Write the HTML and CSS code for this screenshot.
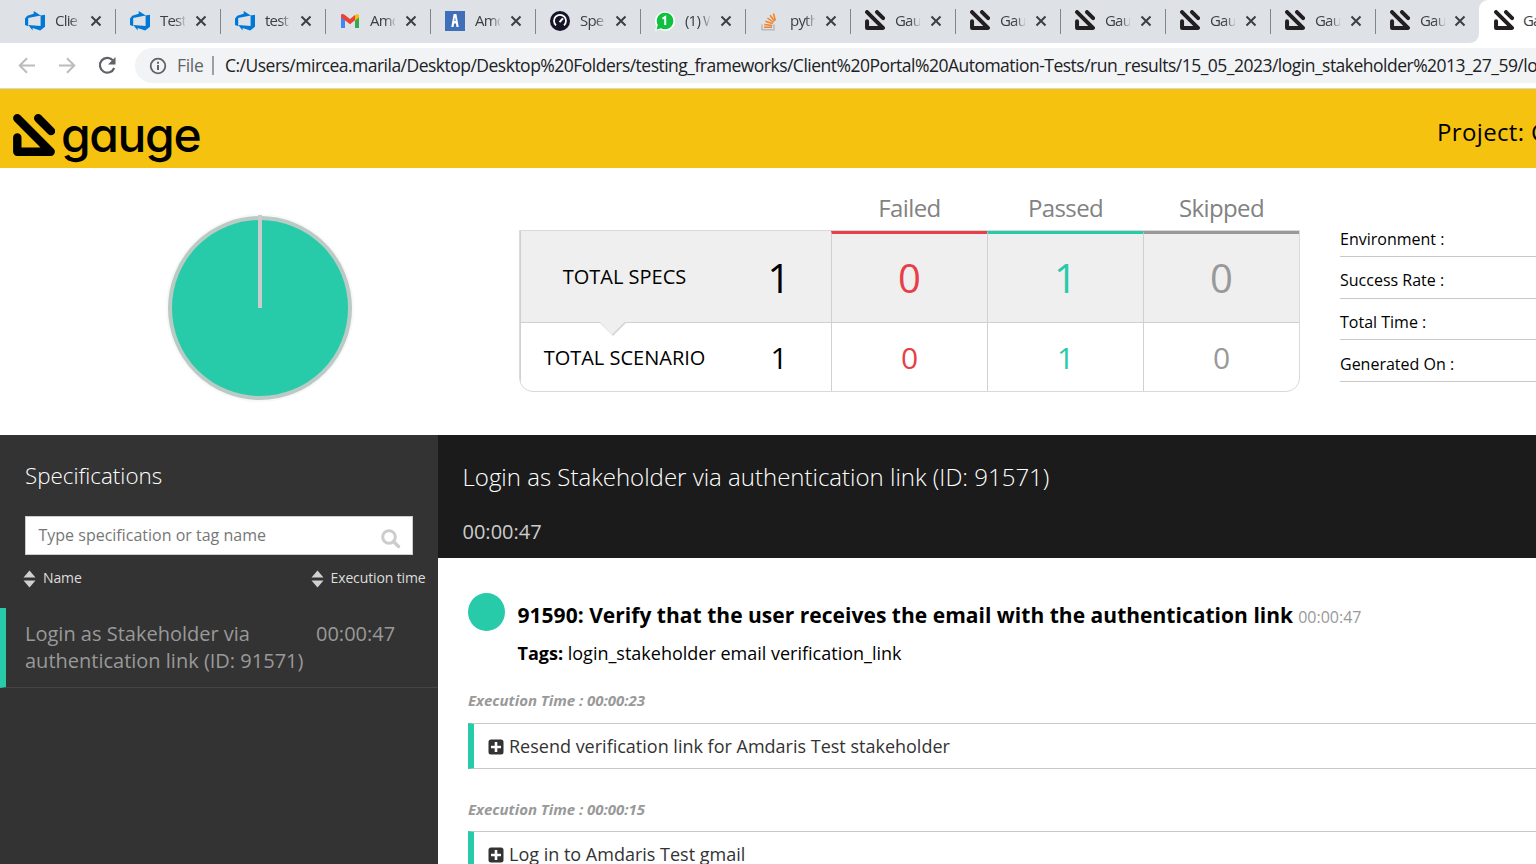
FILE: index.html
```html
<!DOCTYPE html>
<html lang="en">
<head>
<meta charset="utf-8">
<title>Gauge Test Results</title>
<link rel="stylesheet" href="styles.css">
</head>
<body>
<svg class="defs" width="0" height="0" aria-hidden="true">
  <symbol id="gauge" viewBox="0 0 42 42"><path d="M4.3 4.3 37.7 37.7H4.3V23.5M25.2 4.3 38 17.1" fill="none" stroke="currentColor" stroke-width="8.4" stroke-linecap="round" stroke-linejoin="round"/></symbol>
  <symbol id="devops" viewBox="0 0 20 20"><path d="M20 3.8v11.9L15.200 19.600 7.600 16.900v2.700L3.300 14l12.300 1V4.400zM15.700 4.500 8.700 0v2.800L2.200 4.700 0 7.500v6.400l3.200 1.300V6.900z" fill="#0078d7"/></symbol>
  <symbol id="x" viewBox="0 0 12 12"><path d="M1.500 1.500l9 9M10.500 1.500l-9 9" stroke="#3c4043" stroke-width="2" fill="none"/></symbol>
  <symbol id="plus" viewBox="0 0 16 16"><path fill-rule="evenodd" fill="#333" d="M3 0.500h10a2.500 2.500 0 0 1 2.500 2.500v10a2.500 2.500 0 0 1-2.500 2.500H3A2.500 2.500 0 0 1 .5 13V3A2.500 2.500 0 0 1 3 .5zM6.700 3v3.700H3v2.600h3.700V13h2.600V9.300H13V6.700H9.300V3z"/></symbol>
  <symbol id="sort" viewBox="0 0 12 18"><path fill="#d0d0d0" d="M6 .5 12 7.500H0zM6 17.500 12 10.500H0z"/></symbol>
</svg>

<header class="browser">
  <div class="tabs">
    <div class="tab"><svg class="fav"><use href="#devops"/></svg><span class="tab-title">Clie</span><svg class="close"><use href="#x"/></svg></div>
    <div class="tab"><svg class="fav"><use href="#devops"/></svg><span class="tab-title">Test</span><svg class="close"><use href="#x"/></svg></div>
    <div class="tab"><svg class="fav"><use href="#devops"/></svg><span class="tab-title">test</span><svg class="close"><use href="#x"/></svg></div>
    <div class="tab"><svg class="fav" viewBox="0 0 20 20"><path d="M1 5v12h4V8z" fill="#4285f4"/><path d="M19 5v12h-4V8z" fill="#34a853"/><path d="M1 4.500C1 2.500 3.200 2.700 4.500 3.700L10 8l5-4v5.300l-5 4-9-7z" fill="#ea4335"/><path d="M15 4.200c2-1.700 4-1.200 4 .8v1.500l-4 3z" fill="#fbbc04"/></svg><span class="tab-title">Amd</span><svg class="close"><use href="#x"/></svg></div>
    <div class="tab"><svg class="fav" viewBox="0 0 20 20"><path d="M0 0h20v20H0z" fill="#3f6fb9"/><path d="M8.600 3h2.800l2.300 13h-2.200l-.6-3.500h-1.800L8.500 16H6.300zM10 6l-.7 4h1.400z" fill="#fff" fill-rule="evenodd"/></svg><span class="tab-title">Amd</span><svg class="close"><use href="#x"/></svg></div>
    <div class="tab"><svg class="fav" viewBox="0 0 20 20"><circle cx="10" cy="10" r="10" fill="#141526"/><path d="M6 14.300a6 6 0 1 1 8 0" fill="none" stroke="#fff" stroke-width="1.800"/><path d="M9.500 11.200 13 7.300" stroke="#fff" stroke-width="2"/></svg><span class="tab-title">Spe</span><svg class="close"><use href="#x"/></svg></div>
    <div class="tab"><svg class="fav" viewBox="0 0 20 20"><path d="M0 20l1.400-5A10 9.700 0 1 1 5 18.500z" fill="#fff"/><path d="M1.500 18.400 2.800 14A8.300 8.300 0 1 1 6 17.200z" fill="#10c140"/><path d="M7.500 7.600 10.200 6v8" fill="none" stroke="#fff" stroke-width="2"/></svg><span class="tab-title">(1) W</span><svg class="close"><use href="#x"/></svg></div>
    <div class="tab"><svg class="fav" viewBox="0 0 20 20"><path d="M2 13.500v5.300h12v-5.300" fill="none" stroke="#b5b9bd" stroke-width="1.500"/><path d="M4 16.300h8M4.300 13.500l7.900.9M5.400 10.200l7.300 2.400M7.500 7l6 4.500M10.100 4.300l4.400 6M13.500 2.500l1.800 7" stroke="#f48024" stroke-width="1.500"/></svg><span class="tab-title">pyth</span><svg class="close"><use href="#x"/></svg></div>
    <div class="tab"><svg class="fav g"><use href="#gauge"/></svg><span class="tab-title">Gau</span><svg class="close"><use href="#x"/></svg></div>
    <div class="tab"><svg class="fav g"><use href="#gauge"/></svg><span class="tab-title">Gau</span><svg class="close"><use href="#x"/></svg></div>
    <div class="tab"><svg class="fav g"><use href="#gauge"/></svg><span class="tab-title">Gau</span><svg class="close"><use href="#x"/></svg></div>
    <div class="tab"><svg class="fav g"><use href="#gauge"/></svg><span class="tab-title">Gau</span><svg class="close"><use href="#x"/></svg></div>
    <div class="tab"><svg class="fav g"><use href="#gauge"/></svg><span class="tab-title">Gau</span><svg class="close"><use href="#x"/></svg></div>
    <div class="tab last"><svg class="fav g"><use href="#gauge"/></svg><span class="tab-title">Gau</span><svg class="close"><use href="#x"/></svg></div>
    <div class="tab active"><svg class="fav g"><use href="#gauge"/></svg><span class="tab-title full">Ga</span></div>
  </div>
  <div class="toolbar">
    <svg class="nav" viewBox="0 0 20 20"><path d="M18 9.500H3M10 2.200 2.700 9.500l7.300 7.300" fill="none" stroke="#babcbe" stroke-width="2"/></svg>
    <svg class="nav" viewBox="0 0 20 20"><path d="M2 9.500h15M10 2.200l7.300 7.300-7.300 7.300" fill="none" stroke="#babcbe" stroke-width="2"/></svg>
    <svg class="nav" viewBox="0 0 20 20"><path d="M15.800 4.200A7.400 7.400 0 1 0 17.200 12" fill="none" stroke="#5f6368" stroke-width="2.200"/><path d="M18.500 1V8.500H11z" fill="#5f6368"/></svg>
    <div class="omnibox">
      <svg class="info" viewBox="0 0 18 18"><circle cx="9" cy="9" r="7.300" fill="none" stroke="#5f6368" stroke-width="1.800"/><path d="M9 8v5M9 4.800v2" stroke="#5f6368" stroke-width="2"/></svg>
      <span class="scheme">File</span><i class="bar"></i>
      <span class="url">C:/Users/mircea.marila/Desktop/Desktop%20Folders/testing_frameworks/Client%20Portal%20Automation-Tests/run_results/15_05_2023/login_stakeholder%2013_27_59/lo</span>
    </div>
  </div>
</header>

<div class="brand">
  <svg class="brand-mark"><use href="#gauge"/></svg>
  <span class="brand-name">gauge</span>
  <span class="project">Project: C</span>
</div>

<section class="summary">
  <div class="chart">
    <svg width="190" height="190" viewBox="0 0 190 190"><circle cx="95" cy="95" r="94" fill="#f8f8f8"/><circle cx="95" cy="95" r="90" fill="#27caa9" stroke="#bacac5" stroke-width="4"/><path d="M95 2v93" stroke="#cccacc" stroke-width="4"/></svg>
  </div>
  <div class="stats">
    <div class="heads"><span></span><span>Failed</span><span>Passed</span><span>Skipped</span></div>
    <div class="grid">
      <div class="row specs">
        <div class="total"><span class="label">TOTAL SPECS</span><span class="num">1</span></div>
        <div class="cell fail"><span>0</span></div><div class="cell pass"><span>1</span></div><div class="cell skip"><span>0</span></div>
        <svg class="notch" viewBox="0 0 30 16"><path d="M1 2 14 15 28 1z" fill="#d6d6d6"/><path d="M0 0 13 13.500 25.500 1V0z" fill="#efefef"/></svg>
      </div>
      <div class="row scen">
        <div class="total"><span class="label">TOTAL SCENARIO</span><span class="num">1</span></div>
        <div class="cell fail">0</div><div class="cell pass">1</div><div class="cell skip">0</div>
      </div>
    </div>
  </div>
  <ul class="meta"><li>Environment :</li><li>Success Rate :</li><li>Total Time :</li><li>Generated On :</li></ul>
</section>

<div class="report">
  <aside class="side">
    <h3>Specifications</h3>
    <div class="search"><span>Type specification or tag name</span><svg viewBox="0 0 20 20"><circle cx="8" cy="8" r="6.300" fill="none" stroke="#ccc" stroke-width="3"/><path d="M12.500 12.500 17.500 17.500" stroke="#ccc" stroke-width="3.400" stroke-linecap="round"/></svg></div>
    <div class="sorts"><span><svg><use href="#sort"/></svg>Name</span><span><svg><use href="#sort"/></svg>Execution time</span></div>
    <div class="spec"><span class="spec-name">Login as Stakeholder via<br>authentication link (ID: 91571)</span><span class="spec-time">00:00:47</span></div>
  </aside>
  <main class="main">
    <div class="spec-head"><h2>Login as Stakeholder via authentication link (ID: 91571)</h2><p>00:00:47</p></div>
    <div class="scenario">
      <div class="scen-head">
        <i class="dot"></i>
        <div><p class="title"><b>91590: Verify that the user receives the email with the authentication link</b><span>00:00:47</span></p>
        <p class="tags"><b>Tags:</b> <span>login_stakeholder email verification_link</span></p></div>
      </div>
      <p class="exec">Execution Time : 00:00:23</p>
      <div class="step"><svg><use href="#plus"/></svg><span>Resend verification link for Amdaris Test stakeholder</span></div>
      <p class="exec">Execution Time : 00:00:15</p>
      <div class="step"><svg><use href="#plus"/></svg><span>Log in to Amdaris Test gmail</span></div>
    </div>
  </main>
</div>
</body>
</html>
```
FILE: styles.css
```css
* { box-sizing: border-box; margin: 0; padding: 0; }
html, body { width: 1536px; height: 864px; overflow: hidden; }
body { font-family: "Open Sans", "Noto Sans", sans-serif; background: #fff; color: #000; }
.defs { position: absolute; }
svg { display: block; flex: none; }
span { white-space: nowrap; }

.browser { height: 89px; border-bottom: 1px solid #d5d7da; }
.tabs { display: flex; height: 43px; padding-left: 11px; background: #dee1e6; overflow: hidden; }
.tab { display: flex; align-items: center; flex: none; width: 105px; padding-left: 14px; position: relative; }
.tab::after { content: ""; position: absolute; right: 0; top: 9px; width: 1px; height: 25px; background: #80868b; }
.tab.last::after, .tab.active::after { display: none; }
.fav { width: 20px; height: 20px; margin-top: -1px; }
.g { color: #231f20; margin-top: -3px; }
.tab-title { width: 25px; margin-left: 10px; font-size: 15px; line-height: 22px; letter-spacing: -.8px; color: #3c4043; margin-top: -3px; -webkit-mask-image: linear-gradient(90deg, #000 60%, transparent 108%); mask-image: linear-gradient(90deg, #000 60%, transparent 108%); }
.tab-title.full { -webkit-mask-image: none; mask-image: none; margin-left: 9px; }
.close { width: 12px; height: 12px; margin: -1px 0 0 10px; }
.tab.last { width: 103px; background: #dee1e6; border-radius: 0 0 9px 0; z-index: 1; }
.last .close { margin-left: 9px; }
.tab.active { background: #fff; border-radius: 9px 0 0 0; padding-left: 15px; }
.tab.active::before { content: ""; position: absolute; left: -9px; bottom: 0; width: 9px; height: 9px; background: #fff; }
.toolbar { display: flex; align-items: center; height: 45px; padding-left: 17px; background: #fff; }
.nav { width: 20px; height: 20px; margin-right: 20px; }
.omnibox { display: flex; align-items: center; height: 35px; flex: 1; min-width: 0; margin-left: -2px; padding-left: 14px; border-radius: 18px 0 0 18px; background: #f1f3f4; overflow: hidden; font-size: 17.500px; line-height: 24px; }
.omnibox span { margin-top: -1px; flex: none; }
.info { width: 18px; height: 18px; }
.omnibox .scheme { width: 27px; margin-left: 10px; color: #5f6368; letter-spacing: -.3px; }
.bar { flex: none; width: 2px; height: 19px; margin: 0 11px 0 8px; background: #9aa0a6; }
.url { color: #202124; letter-spacing: -.510px; }

.brand { display: flex; height: 79px; padding-left: 13px; background: #f5c20f; overflow: hidden; }
.brand-mark { width: 42px; height: 42px; margin-top: 25px; }
.brand-name { flex: none; width: 150px; margin: 15px 0 0 6px; font: 500 48px/62px Inter, sans-serif; font-feature-settings: "cv11"; letter-spacing: -1.400px; }
.project { flex: none; margin: 25px 0 0 1226px; font-size: 24px; line-height: 36px; letter-spacing: .350px; }

.summary { display: flex; height: 267px; }
.chart { width: 519px; padding: 45px 0 0 165px; }
.stats { width: 781px; padding-top: 19px; }
.heads { display: flex; height: 43px; font-size: 24px; line-height: 42px; color: #828282; letter-spacing: -.6px; }
.heads span { width: 156px; text-align: center; }
.heads span:first-child { width: 312.500px; }
.grid { height: 162px; border: 1px solid #d9d9d9; border-radius: 0 0 14px 14px; overflow: hidden; }
.row { display: flex; position: relative; }
.specs { height: 92px; background: #efefef; border-bottom: 1px solid #d0d0d0; }
.scen { height: 69px; }
.total { display: flex; align-items: center; width: 311px; border-left: 1px solid #d0d0d0; }
.label { width: 207px; text-align: center; font-size: 20px; }
.total .num { width: 102px; text-align: center; }
.cell { display: flex; align-items: center; justify-content: center; width: 156px; border-left: 1px solid #d0d0d0; }
.specs .num, .specs .cell { font-size: 40px; }
.specs .cell { border-top: 3px solid; padding-bottom: 2px; }
.scen .num, .scen .cell { font-size: 30px; }
.specs .num { padding-top: 1px; }
.cell.fail { color: #e73e48; }
.cell.pass { color: #27caa9; }
.cell.skip { color: #999; }
.specs .cell { border-left-color: #d0d0d0; }
.notch { position: absolute; left: 79px; top: 90px; width: 30px; height: 16px; z-index: 1; }
.meta { flex: none; width: 236px; padding: 47px 0 0 40px; list-style: none; overflow: hidden; }
.meta li { height: 42px; padding-top: 12px; border-bottom: 1px solid #c8c8c8; font-size: 16px; line-height: 25px; white-space: nowrap; }
.meta li:nth-child(2) { padding-top: 11px; }
.meta li:nth-child(3) { height: 41px; padding-top: 11px; }

.report { display: flex; height: 429px; }
.side { width: 438px; background: #333; color: #fff; }
.side h3 { height: 81px; padding: 23px 0 0 25px; font-size: 22.400px; line-height: 36px; font-weight: 300; }
.search { display: flex; justify-content: space-between; width: 388px; height: 39px; margin-left: 25px; padding: 0 11px 0 12.500px; background: #fff; border: 1px solid #ccc; color: #777; font-size: 16px; line-height: 36px; }
.search svg { width: 20px; height: 20px; margin-top: 12px; }
.sorts { display: flex; justify-content: space-between; height: 53px; padding: 11px 12.500px 0 23px; font-size: 14px; line-height: 24px; color: #ddd; letter-spacing: -.130px; }
.sorts span { display: flex; }
.sorts svg { width: 13px; height: 18px; margin: 4px 7px 0 0; }
.spec { display: flex; height: 80px; padding: 12px 0 0 19px; border-left: 6px solid #27caa9; border-bottom: 1px solid #454545; color: #999; font-size: 20px; line-height: 27px; }
.spec-name { width: 291px; }
.main { flex: 1; min-width: 0; }
.spec-head { height: 123px; padding: 24px 0 0 24.500px; background: #1b1b1b; color: #fff; }
.spec-head h2 { font-size: 24px; line-height: 36px; font-weight: 300; white-space: nowrap; }
.spec-head p { margin-top: 22px; font-size: 20px; line-height: 30px; color: #ccc; }
.scenario { padding: 35px 0 0 30px; }
.scen-head { display: flex; gap: 12.500px; height: 92px; }
.dot { width: 37px; height: 38px; border-radius: 50%; background: #27caa9; }
.title { padding-top: 7px; font-size: 21px; line-height: 30px; white-space: nowrap; letter-spacing: .025px; }
.title span { margin-left: 5px; font-size: 16px; color: #999; letter-spacing: 0; }
.tags { margin-top: 8px; font-size: 18px; line-height: 26px; }
.exec { height: 38px; padding-top: 3px; font-size: 15px; line-height: 24px; font-weight: 700; font-style: italic; color: #999; letter-spacing: -.03px; }
.step + .exec { height: 37px; }
.step { display: flex; height: 46px; margin-bottom: 25px; padding: 0 0 0 14px; border: 1px solid #c8c8c8; border-left: 6px solid #27caa9; border-right: 0; color: #333; font-size: 18px; line-height: 44px; }
.step svg { width: 16px; height: 16px; margin: 15px 5px 0 0; }
```
